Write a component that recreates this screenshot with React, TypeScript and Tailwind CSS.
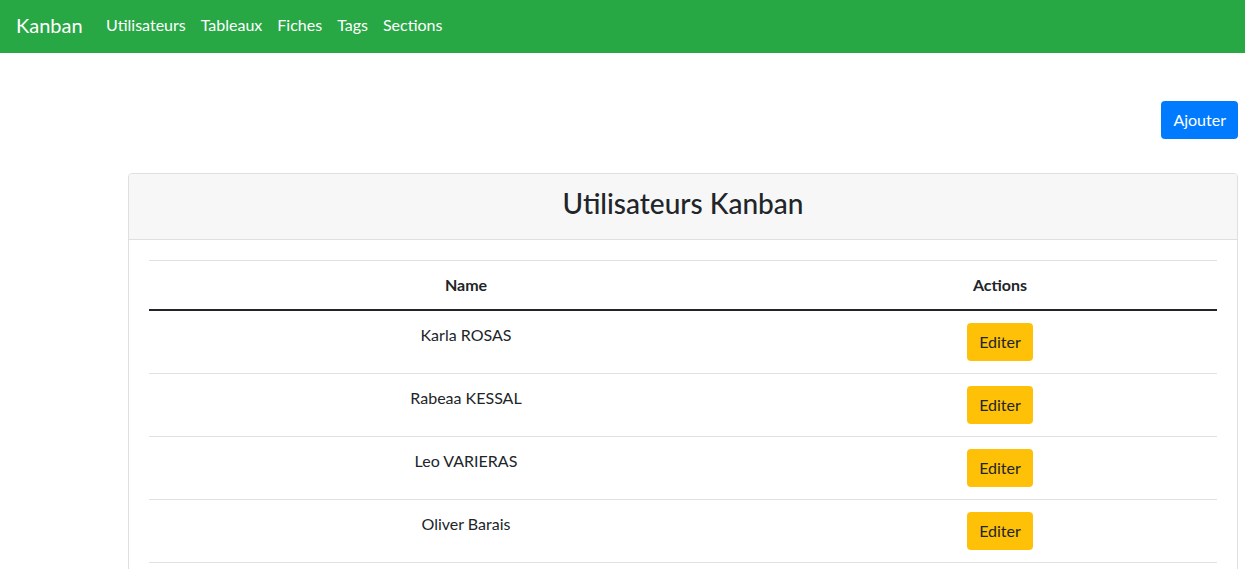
const links = ['Utilisateurs', 'Tableaux', 'Fiches', 'Tags', 'Sections'];

const users = ['Karla ROSAS', 'Rabeaa KESSAL', 'Leo VARIERAS', 'Oliver Barais'];

export default function App() {
    return (
        <div className="min-h-screen bg-white text-[#212529] text-[16px] leading-6 font-['Lato','Noto_Sans',sans-serif]">
            {/* Navbar */}
            <nav className="h-[53px] bg-[#28a745] flex items-center px-4 pb-1">
                <span className="text-white text-[20px] mr-[16px]">Kanban</span>
                <div className="flex">
                    {links.map((link) => (
                        <a key={link} href="#" className="text-white px-[7.5px]">
                            {link}
                        </a>
                    ))}
                </div>
            </nav>

            <main className="pr-[7px] pt-12">
                <div className="flex justify-end">
                    <button className="h-[38px] px-3 rounded bg-[#007bff] text-white">Ajouter</button>
                </div>

                {/* Card */}
                <section className="ml-[128px] mt-[34px] border border-[#dfdfdf] rounded bg-white">
                    <header className="bg-[#f7f7f7] border-b border-[#dfdfdf] px-5 pt-3 pb-[19px] rounded-t">
                        <h3 className="text-center text-[28px] leading-[34px] font-medium">Utilisateurs Kanban</h3>
                    </header>
                    <div className="p-5">
                        <table className="w-full border-collapse">
                            <thead>
                                <tr className="border-t border-[#dee2e6]">
                                    <th className="w-[634px] p-3 font-bold border-b-2 border-[#212529]">Name</th>
                                    <th className="p-3 font-bold border-b-2 border-[#212529]">Actions</th>
                                </tr>
                            </thead>
                            <tbody>
                                {users.map((user) => (
                                    <tr key={user} className="border-b border-[#dee2e6]">
                                        <td className="p-3 text-center align-top">{user}</td>
                                        <td className="p-3 text-center">
                                            <button className="h-[38px] px-3 rounded bg-[#ffc107] text-[#212529]">Editer</button>
                                        </td>
                                    </tr>
                                ))}
                            </tbody>
                        </table>
                    </div>
                </section>
            </main>
        </div>
    );
}
